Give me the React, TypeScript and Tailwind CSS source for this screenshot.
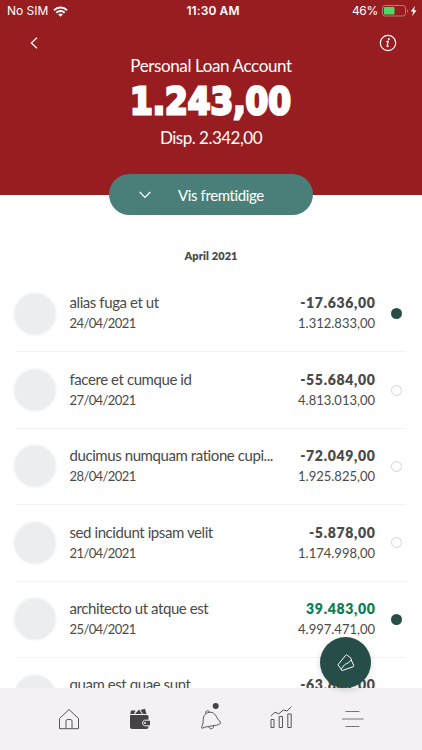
import React from 'react';

type Transaction = {
  id: number;
  title: string;
  date: string;
  amount: string;
  balance: string;
  marked: boolean;
};

const transactions: Transaction[] = [
  { id: 1, title: 'alias fuga et ut', date: '24/04/2021', amount: '-17.636,00', balance: '1.312.833,00', marked: true },
  { id: 2, title: 'facere et cumque id', date: '27/04/2021', amount: '-55.684,00', balance: '4.813.013,00', marked: false },
  { id: 3, title: 'ducimus numquam ratione cupi...', date: '28/04/2021', amount: '-72.049,00', balance: '1.925.825,00', marked: false },
  { id: 4, title: 'sed incidunt ipsam velit', date: '21/04/2021', amount: '-5.878,00', balance: '1.174.998,00', marked: false },
  { id: 5, title: 'architecto ut atque est', date: '25/04/2021', amount: '39.483,00', balance: '4.997.471,00', marked: true },
  { id: 6, title: 'quam est quae sunt', date: '22/04/2021', amount: '-63.841,00', balance: '2.410.112,00', marked: false },
];

const StatusBar = () => (
  <div className="relative flex h-[22px] items-center justify-between pl-[7px] pr-[5px] font-['Inter',sans-serif] text-xs">
    <div className="flex items-center gap-[5px]">
      <span>No SIM</span>
      <svg width="15" height="11" viewBox="0 0 15 11" fill="none" stroke="white" strokeWidth="2">
        <path d="M1 4.2a9.3 9.3 0 0 1 13 0" />
        <path d="M3.4 6.7a5.9 5.9 0 0 1 8.2 0" />
        <path d="M7.5 10.8 5.2 8.5a3.3 3.3 0 0 1 4.6 0Z" fill="white" stroke="none" />
      </svg>
    </div>
    <span className="absolute left-1/2 ml-[2px] -translate-x-1/2 whitespace-nowrap font-semibold tracking-[0.1px]">11:30 AM</span>
    <div className="flex items-center">
      <span className="mr-[4px] tracking-[-0.3px]">46%</span>
      <svg width="35" height="12" viewBox="0 0 35 12">
        <rect x="0.5" y="0.5" width="23" height="10.5" rx="2.5" fill="none" stroke="#c07779" />
        <rect x="2" y="2" width="10.5" height="7.5" rx="1" fill="#4cd964" />
        <path d="M25 4v4c1.3-.6 1.3-3.4 0-4Z" fill="#c07779" />
        <path d="m33 .8-4.2 5.6h2.4l-1 4.8 4.3-6H32Z" fill="white" />
      </svg>
    </div>
  </div>
);

const Header = () => (
  <header className="relative h-[195px] bg-[#981d20] text-white">
    <StatusBar />
    <div className="flex h-[32px] items-start justify-between pl-[30px] pr-[25px] pt-[12px]">
      <svg className="mt-[3px]" width="8" height="12" viewBox="0 0 8 12" fill="none" stroke="white" strokeWidth="1.2">
        <path d="M7 .7 1.3 6 7 11.3" />
      </svg>
      <svg width="18" height="18" viewBox="0 0 18 18" fill="none" stroke="white">
        <circle cx="9" cy="9" r="7.7" strokeWidth="1.2" />
        <path d="m7.3 7.6 2-.4-1.2 4.6c-.2 1 .7.9 1.7.1" strokeWidth="1.2" />
        <circle cx="9.8" cy="5" r="1" fill="white" stroke="none" />
      </svg>
    </div>
    <div className="flex flex-col items-center">
      <h1 className="mt-px text-[17px] leading-[22px] tracking-[-0.38px]">Personal Loan Account</h1>
      <svg className="mt-[3px] overflow-visible" width="164" height="46" viewBox="0 0 164 46">
        <text
          x="1"
          y="34"
          textLength="161"
          lengthAdjust="spacingAndGlyphs"
          className="fill-white stroke-white font-['DejaVu_Sans',sans-serif] text-[37px] font-bold"
          strokeWidth="2.8"
        >
          1.243,00
        </text>
      </svg>
      <p className="mt-px text-[17px] leading-[22px] tracking-[-0.5px]">Disp. 2.342,00</p>
    </div>
    <button className="absolute left-[109px] top-[174px] flex h-[41px] w-[204px] items-center rounded-full bg-[#4a7f79] pl-[30px] text-[15px]">
      <svg width="12" height="8" viewBox="0 0 12 8" fill="none" stroke="white" strokeWidth="1.2">
        <path d="m.7 1 5.3 5.3L11.3 1" />
      </svg>
      <span className="ml-[27px] mt-px tracking-[-0.38px]">Vis fremtidige</span>
    </button>
  </header>
);

const TransactionRow = ({ item }: { item: Transaction }) => (
  <li className="relative flex h-[76.4px] shrink-0 items-center border-b border-[#f2f2f2]">
    <div className="-ml-[1px] size-[40px] shrink-0 rounded-full bg-[#ebedef] shadow-[0_0_3px_1px_#ececec]" />
    <div className="ml-[14.5px] w-[208px] pb-[0.5px]">
      <p className="whitespace-nowrap text-[15px] leading-[21px] tracking-[-0.42px]">{item.title}</p>
      <p className="text-[13px] leading-[21px] tracking-[-0.6px]">{item.date}</p>
    </div>
    <div className="flex-1 pb-[0.5px] pr-[0.5px] text-right">
      <p
        className={
          item.amount.startsWith('-')
            ? 'text-[14px] leading-[21px] font-extrabold tracking-[0.65px]'
            : 'text-[14px] leading-[21px] font-extrabold tracking-[0.65px] text-[#087f52]'
        }
      >
        {item.amount}
      </p>
      <p className="pr-[0.5px] text-[13px] leading-[21px]">{item.balance}</p>
    </div>
    <span
      className={
        item.marked
          ? 'ml-[14.5px] mr-[4.5px] size-[11px] rounded-full bg-[#264d47]'
          : 'ml-[14.5px] mr-[4.5px] size-[11px] rounded-full border border-[#d4d4d4]'
      }
    />
  </li>
);

const TabBar = () => (
  <nav className="relative flex h-[62px] shrink-0 justify-between bg-[#f3f1f3] px-[57px] pt-[15px]">
    <svg width="24" height="30" viewBox="0 0 24 30" fill="none" stroke="#555" strokeWidth="1">
      <path d="M2.5 15.5 12 6.5l9.5 9v10.2h-19ZM9 25.5V18q0-1.500 1.500-1.500h3Q15 16.500 15 18v7.500" />
    </svg>
    <svg width="24" height="30" viewBox="0 0 24 30">
      <path d="M2 12h17q1.500 0 1.500 1.500V24q0 2-2 2H4q-2 0-2-2Z" fill="#444" />
      <path d="m2.200 11 .8-3.500 4.500 0L6 11Z" fill="#444" />
      <path d="m7 11 4-4.500 3 4.500ZM12.500 7l4.500-1.200 1.500 5.200h-3.500Z" fill="#444" />
      <path d="M22.500 17.200h-6a3 3 0 0 0 0 5.600h6Z" fill="#444" stroke="#f3f1f3" />
      <circle cx="17" cy="20" r="1" fill="#f3f1f3" />
    </svg>
    <svg width="24" height="30" viewBox="0 0 24 30" fill="none" stroke="#555">
      <path d="M3 25.300c-1.300-1.300.8-2.500 1-5.300.2-4.500.2-8.700 4.700-10.300 4.800-1.600 7.700 1.300 9.300 5 1.200 2.800 4 3.500 3.300 5.800-2.500 2-5 1.700-8.300 2.400-4 .8-6.500.7-10 2.400Z" />
      <path d="M7 10.600c-1.200-2.800 2.300-4 3.600-1.500M9.800 24c1 2.700 4.700 2.200 5-1" />
      <circle cx="16.700" cy="3" r="3" fill="#444" stroke="none" />
    </svg>
    <svg width="24" height="30" viewBox="0 0 24 30" fill="none" stroke="#555">
      <path d="M1 16.500h3v8H1ZM9.200 13.500h3.300v11H9.200ZM17.800 11h3.400v13.500h-3.400Z" />
      <path d="m.8 13 4-3.800 4 1.600L13.300 7l3.700 1 4.500-4.500" />
    </svg>
    <svg width="24" height="30" viewBox="0 0 24 30" fill="none" stroke="#777">
      <path d="M4.500 8.500h14M1 16h21.500M4.500 23.500h14" />
    </svg>
  </nav>
);

export default function App() {
  return (
    <div className="relative flex h-[750px] w-[422px] flex-col overflow-hidden bg-white font-['Lato',sans-serif] text-[#4a4a4a]">
      <Header />
      <main className="min-h-0 flex-1 overflow-hidden px-4">
        <h2 className="mt-[54px] text-center text-[11px] leading-[14px] font-extrabold tracking-[0.1px]">April 2021</h2>
        <ul className="mt-[13px] flex flex-col">
          {transactions.map((item) => (
            <TransactionRow key={item.id} item={item} />
          ))}
        </ul>
      </main>
      <TabBar />
      <button className="absolute left-[320px] top-[637px] flex size-[51px] items-center justify-center rounded-full bg-[#264d47] shadow-[0_2px_6px_rgba(0,0,0,0.15)]">
        <svg width="18" height="18" viewBox="0 0 18 18" fill="none" stroke="white" strokeLinejoin="round">
          <path d="M4 14.800.9 10.800 8.700 1.300q.8-.8 1.700 0l3.500 2.900q.9.800.3 1.700L12.500 7.800c-1.500 2-4.500 1.500-6 4.200-.8 1.400-1.500 2.300-2.500 2.800" />
          <path d="m14.200 5.900 2.600 5.700q.2.900-.8 1.200L5.200 16.500q-1 .2-1.200-1.700" />
        </svg>
      </button>
    </div>
  );
}
